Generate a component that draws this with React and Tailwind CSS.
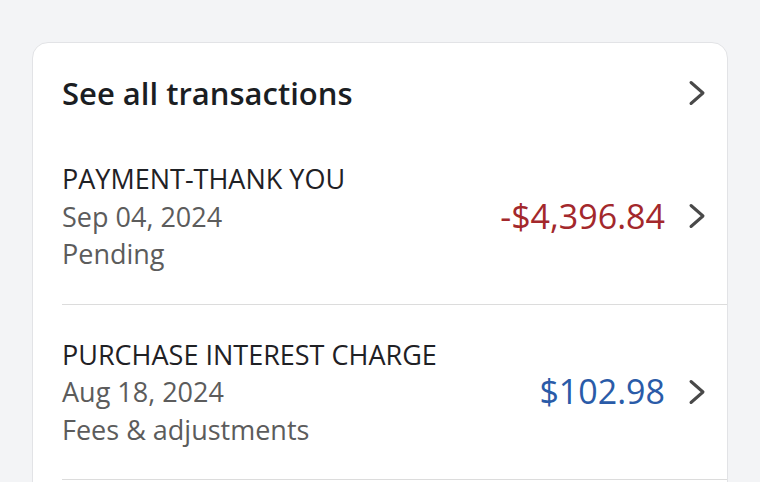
import { useState } from "react"

const transactions = [
  {
    id: 1,
    name: "PAYMENT-THANK YOU",
    date: "Sep 04, 2024",
    status: "Pending",
    amount: "-$4,396.84",
    credit: true,
  },
  {
    id: 2,
    name: "PURCHASE INTEREST CHARGE",
    date: "Aug 18, 2024",
    status: "Fees & adjustments",
    amount: "$102.98",
    credit: false,
  },
]

function Chevron({ className }) {
  return (
    <svg className={className} width="18" height="26" viewBox="0 0 18 26" fill="none">
      <polyline
        points="3,2.5 15,13 3,23.5"
        stroke="#494949"
        strokeWidth="3"
        strokeLinecap="round"
        strokeLinejoin="round"
      />
    </svg>
  )
}

export default function App() {
  const [selected, setSelected] = useState(null)

  return (
    <div className="h-[482px] overflow-hidden bg-[#f3f4f6] px-8 pt-[42px] font-['Open_Sans',sans-serif]">
      <div className="rounded-[16px] border border-[#e2e3e6] bg-white pb-10">
        <div className="flex items-center justify-between pl-[29px] pr-[21px] pt-[30px] pb-[16px]">
          <h2 className="text-[31px] font-semibold leading-[40px] text-[#1b1e23]">See all transactions</h2>
          <Chevron />
        </div>

        {transactions.map((t) => (
          <div
            key={t.id}
            onClick={() => setSelected(t.id)}
            className={`ml-[29px] flex cursor-pointer items-center border-b border-[#dcdcdc] pt-[31px] pb-[31px] pr-[21px] ${
              selected === t.id ? "bg-gray-50" : ""
            }`}
          >
            <div className="flex-1 text-[27px] leading-[37.5px]">
              <div className="text-[#1f2125]">{t.name}</div>
              <div className="text-[#5c5c5c]">{t.date}</div>
              <div className="text-[#5c5c5c]">{t.status}</div>
            </div>
            <span className={`text-[34px] ${t.credit ? "text-[#a3282c]" : "text-[#2a5ba8]"}`}>{t.amount}</span>
            <Chevron className="ml-[23px]" />
          </div>
        ))}
      </div>
    </div>
  )
}
